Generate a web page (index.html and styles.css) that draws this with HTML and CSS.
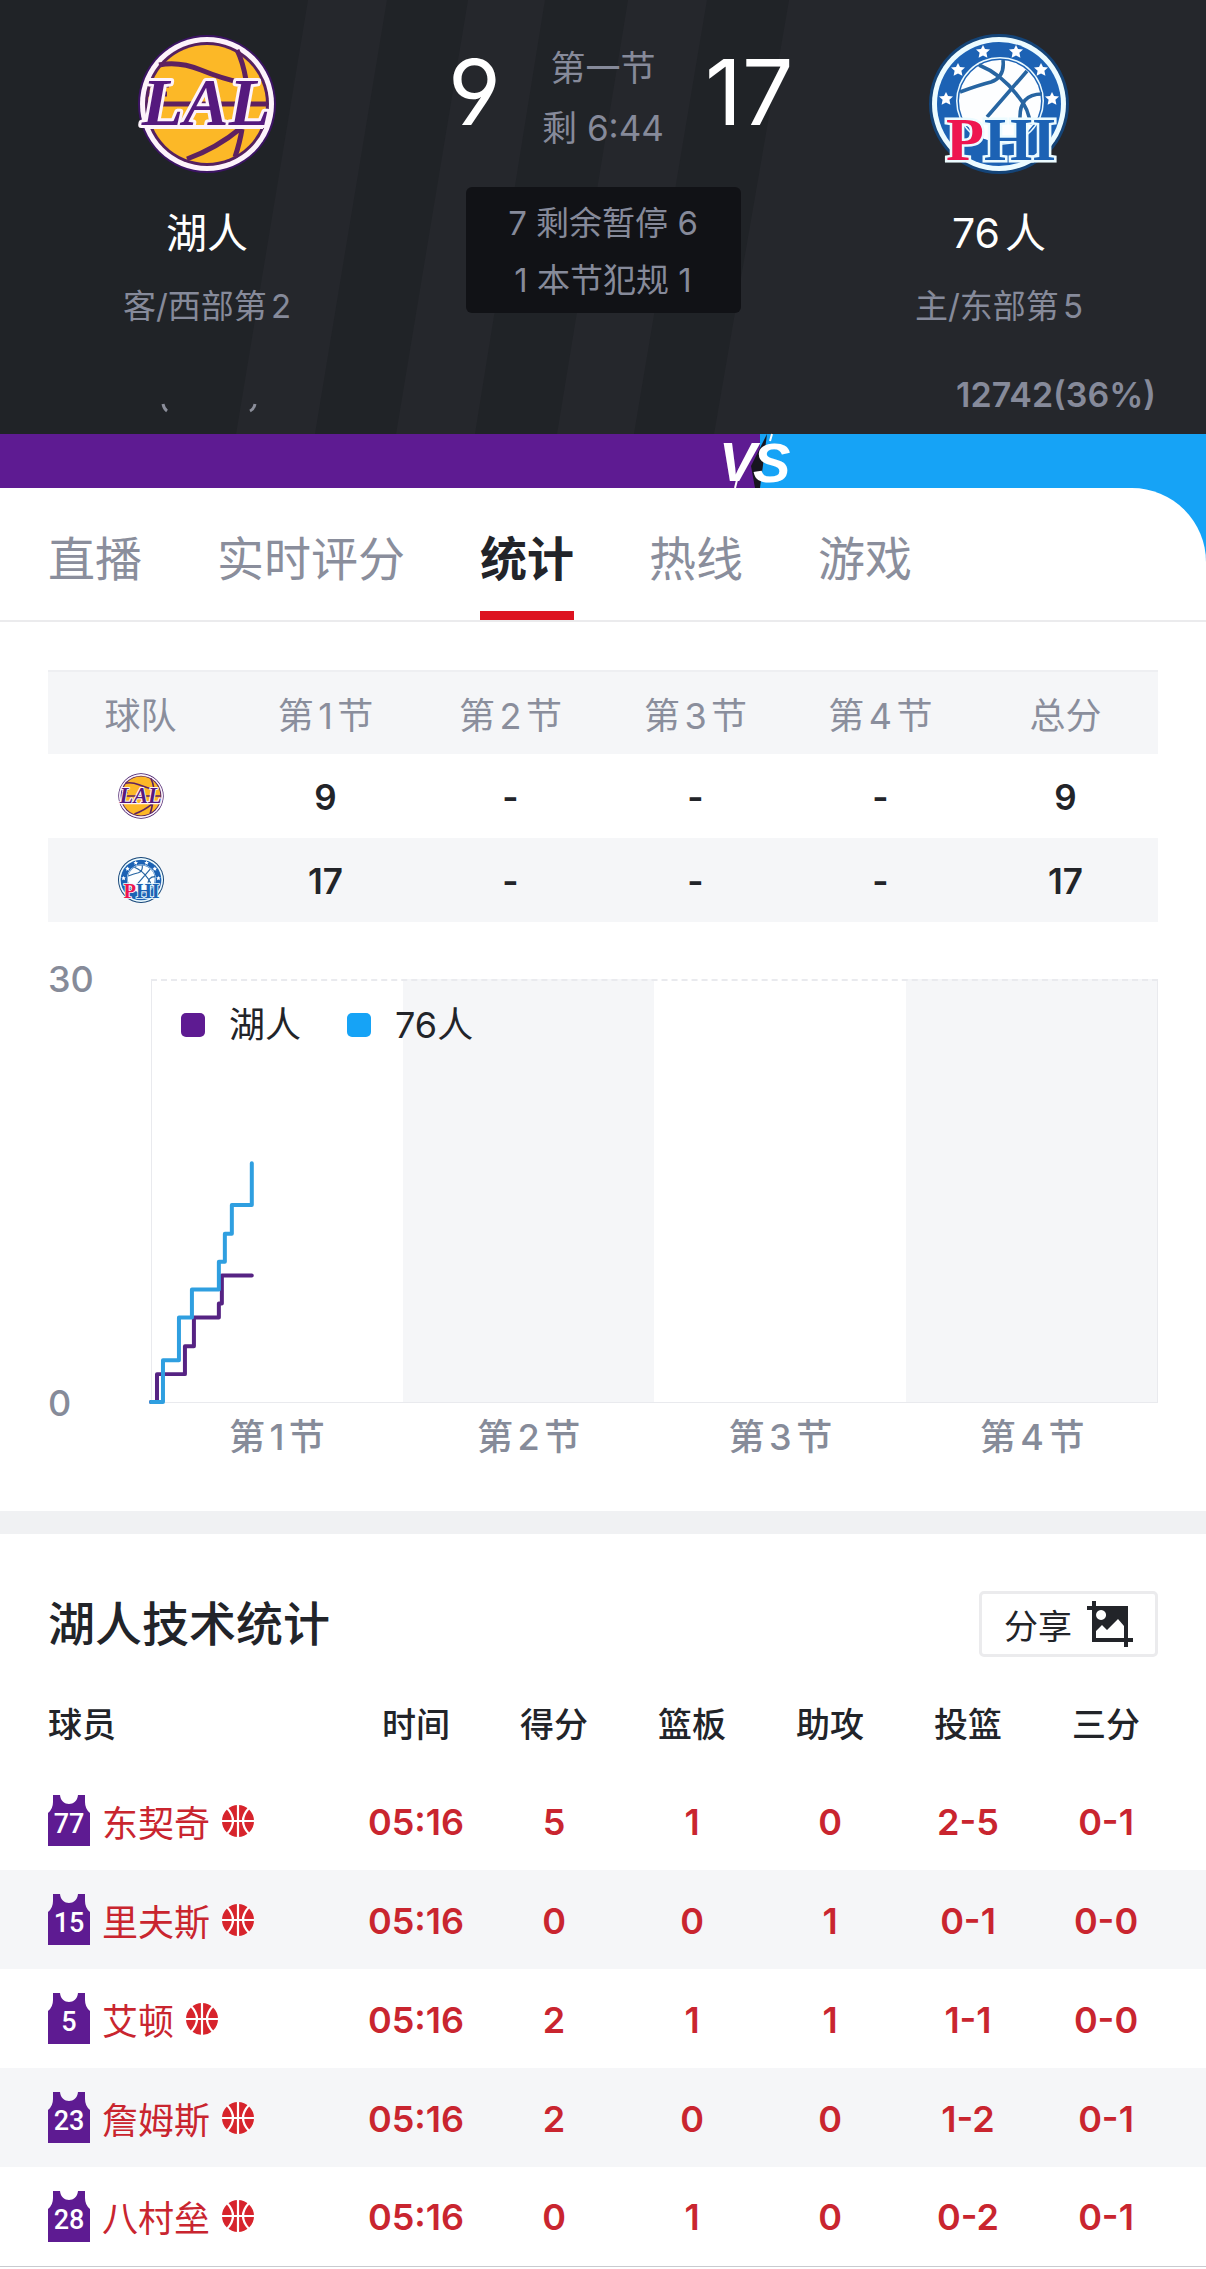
FILE: index.html
```html
<!DOCTYPE html>
<html lang="zh-CN">
<head>
<meta charset="utf-8">
<meta name="viewport" content="width=device-width, initial-scale=1">
<title>湖人 - 76人 统计</title>
<link rel="stylesheet" href="styles.css">
</head>
<body>
<svg class="defs" aria-hidden="true">
  <defs>
    <symbol id="lal" viewBox="0 0 140 140">
      <circle cx="70" cy="70" r="69" fill="#3c1464"/>
      <circle cx="70" cy="70" r="67" fill="#fdf3fb"/>
      <circle cx="70" cy="70" r="62" fill="#552060"/>
      <circle cx="70" cy="70" r="59" fill="#fcb827"/>
      <g fill="none" stroke="#5e2160" stroke-width="5">
        <path d="M22 31Q42 27 64 36T106 49M100 16Q106 28 109 46M12 51H32M10 60H30M10 70H130M50 125Q80 114 104 94M98 123Q103 108 105 95"/>
      </g>
      <path d="M8 93H126" stroke="#fdf3fb" stroke-width="4"/>
      <text x="69" y="91" text-anchor="middle" class="lal-text">LAL</text>
    </symbol>
    <symbol id="phi" viewBox="0 0 140 140">
      <circle cx="70" cy="70" r="70" fill="#144478"/>
      <circle cx="70" cy="70" r="67" fill="#ecfbff"/>
      <circle cx="70" cy="70" r="62" fill="#1c62b4"/>
      <circle cx="71" cy="67" r="44" fill="#ecfbff"/>
      <circle cx="71" cy="67" r="42.5" fill="#1c62b4"/>
      <circle cx="71" cy="67" r="41" fill="#fdfeff"/>
      <g fill="none" stroke="#2765a2" stroke-width="3.6">
        <path d="M50 31Q72 40 88 61Q101 76 101 91M31 58Q50 51 62 48Q76 43 74 26M98 37L58 83M91 85Q90 60 113 60"/>
      </g>
      <g fill="#fff">
        <path id="star" d="M54 11l2 4 5 .6-3.600 3.200 1 5-4.400-2.400-4.400 2.400 1-5-3.600-3.200 5-.6z"/>
        <use href="#star" x="33"/><use href="#star" x="-25" y="18"/><use href="#star" x="58" y="18"/>
        <use href="#star" x="-37" y="47"/><use href="#star" x="69" y="47"/>
      </g>
      <path d="M34 103Q50 100 70 112V130Q48 126 34 103Z" fill="#1c62b4"/>
      <text x="17" y="126" class="phi-text"><tspan fill="#ee1550">P</tspan><tspan fill="#1c62b4">HI</tspan></text>
    </symbol>
    <symbol id="jersey" viewBox="0 0 42 51">
      <path d="M5 0H12C13 12 29 12 30 0H37V7Q37 14 42 18V51H0V18Q5 14 5 7Z" fill="#5e1b92"/>
    </symbol>
    <symbol id="ball" viewBox="0 0 32 32">
      <circle cx="16" cy="16" r="16" fill="#d7242c"/>
      <path d="M0 16H32M16 0V32M5 3Q17 16 5 29M27 3Q15 16 27 29" fill="none" stroke="#fff" stroke-width="2.200"/>
    </symbol>
  </defs>
</svg>

<header class="hero">
  <svg class="hero-stripes" viewBox="0 0 1206 434" preserveAspectRatio="none" aria-hidden="true">
    <path d="M308 0H387L315 434H236ZM468 0H545L475 434H396ZM628 0H707L634 434H557ZM789 0H1206V434H714Z" fill="#25272c"/>
  </svg>
  <div class="match">
    <section class="team">
      <svg class="team-logo" role="img" aria-label="LAL"><use href="#lal"/></svg>
      <h1 class="team-name">湖人</h1>
      <p class="team-rank">客/西部第2</p>
    </section>
    <section class="center">
      <div class="scores">
        <strong class="score score-away">9</strong>
        <div class="period"><p>第一节</p><p>剩 6:44</p></div>
        <strong class="score score-home">17</strong>
      </div>
      <div class="fouls"><p>7 剩余暂停 6</p><p>1 本节犯规 1</p></div>
    </section>
    <section class="team">
      <svg class="team-logo" role="img" aria-label="PHI"><use href="#phi"/></svg>
      <h1 class="team-name">76人</h1>
      <p class="team-rank">主/东部第5</p>
    </section>
  </div>
  <div class="support">
    <svg class="support-mark" width="140" height="40" viewBox="0 0 140 40" aria-hidden="true">
      <path d="M45 29q1 5 4 7M132 36q4-2 5-7" fill="none" stroke="#8b8e9a" stroke-width="3"/>
    </svg>
    <span>12742(36%)</span>
  </div>
</header>

<div class="versus">
  <div class="versus-away"></div>
  <svg class="versus-logo" width="72" height="54" viewBox="0 0 72 54" role="img" aria-label="VS">
    <path d="M46 0L39 54H34L30 32Z" fill="#17151f"/>
    <path d="M51 0L49 7M14 54L16 46" stroke="#fff" stroke-width="2"/>
    <text x="-2" y="47" class="vs-text">V</text><text x="32" y="48" class="vs-text">S</text>
  </svg>
</div>
<div class="tabs-wrap">
  <nav class="tabs">
    <a href="#live">直播</a>
    <a href="#rating">实时评分</a>
    <a href="#stats" class="active" aria-current="page">统计</a>
    <a href="#hotline">热线</a>
    <a href="#games">游戏</a>
  </nav>
</div>

<main>
  <section class="summary">
    <table class="quarters">
      <thead><tr><th>球队</th><th>第1节</th><th>第2节</th><th>第3节</th><th>第4节</th><th>总分</th></tr></thead>
      <tbody>
        <tr><td><svg class="mini-logo" role="img" aria-label="湖人"><use href="#lal"/></svg></td><td>9</td><td>-</td><td>-</td><td>-</td><td>9</td></tr>
        <tr><td><svg class="mini-logo" role="img" aria-label="76人"><use href="#phi"/></svg></td><td>17</td><td>-</td><td>-</td><td>-</td><td>17</td></tr>
      </tbody>
    </table>
    <div class="chart">
      <div class="y-axis"><span>30</span><span>0</span></div>
      <div class="plot">
        <div class="legend">
          <span class="key key-away">湖人</span>
          <span class="key key-home">76人</span>
        </div>
        <svg class="lines" viewBox="0 0 1007 423" preserveAspectRatio="none" aria-hidden="true">
          <path class="line-away" d="M-1 423H5V395H33V367H42V338H67V324H70V296H100"/>
          <path class="line-home" d="M-1 423H11V381H27V338H40V310H67V282H73V254H80V225H100V183"/>
        </svg>
      </div>
      <div class="x-axis"><span>第1节</span><span>第2节</span><span>第3节</span><span>第4节</span></div>
    </div>
  </section>

  <section class="players">
    <div class="players-head">
      <h2>湖人技术统计</h2>
      <button type="button" class="share">分享
        <svg width="46" height="46" viewBox="0 0 46 46" aria-hidden="true">
          <path fill="#222429" fill-rule="evenodd" d="M5 0H9V5H41V37H46V41H41V46H37V41H5V9H0V5H5ZM14 9a5 5 0 1 0 .1 0ZM9 30V37H37V25L31 18L20 29L15 24Z"/>
        </svg>
      </button>
    </div>
    <table class="stats">
      <colgroup><col class="col-player"><col class="col-stat" span="5"><col></colgroup>
      <thead><tr><th>球员</th><th>时间</th><th>得分</th><th>篮板</th><th>助攻</th><th>投篮</th><th>三分</th></tr></thead>
      <tbody>
        <tr><th><div class="player"><svg class="jersey" viewBox="0 0 42 51"><use href="#jersey"/><text x="21" y="38">77</text></svg><a href="#p77">东契奇</a><svg class="ball" aria-hidden="true"><use href="#ball"/></svg></div></th><td>05:16</td><td>5</td><td>1</td><td>0</td><td>2-5</td><td>0-1</td></tr>
        <tr><th><div class="player"><svg class="jersey" viewBox="0 0 42 51"><use href="#jersey"/><text x="21" y="38">15</text></svg><a href="#p15">里夫斯</a><svg class="ball" aria-hidden="true"><use href="#ball"/></svg></div></th><td>05:16</td><td>0</td><td>0</td><td>1</td><td>0-1</td><td>0-0</td></tr>
        <tr><th><div class="player"><svg class="jersey" viewBox="0 0 42 51"><use href="#jersey"/><text x="21" y="38">5</text></svg><a href="#p5">艾顿</a><svg class="ball" aria-hidden="true"><use href="#ball"/></svg></div></th><td>05:16</td><td>2</td><td>1</td><td>1</td><td>1-1</td><td>0-0</td></tr>
        <tr><th><div class="player"><svg class="jersey" viewBox="0 0 42 51"><use href="#jersey"/><text x="21" y="38">23</text></svg><a href="#p23">詹姆斯</a><svg class="ball" aria-hidden="true"><use href="#ball"/></svg></div></th><td>05:16</td><td>2</td><td>0</td><td>0</td><td>1-2</td><td>0-1</td></tr>
        <tr><th><div class="player"><svg class="jersey" viewBox="0 0 42 51"><use href="#jersey"/><text x="21" y="38">28</text></svg><a href="#p28">八村垒</a><svg class="ball" aria-hidden="true"><use href="#ball"/></svg></div></th><td>05:16</td><td>0</td><td>1</td><td>0</td><td>0-2</td><td>0-1</td></tr>
      </tbody>
    </table>
  </section>
</main>
</body>
</html>
```
FILE: styles.css
```css
* { box-sizing: border-box; }

body {
  margin: 0;
  background: #fff;
  color: #222429;
  font-family: Inter, "Noto Sans CJK SC", sans-serif;
  text-autospace: normal;
}

h1, h2, p { margin: 0; font-weight: 400; }
a { color: inherit; text-decoration: none; }
table { width: 100%; border-collapse: collapse; table-layout: fixed; }
th, td { padding: 0; text-align: center; }

.defs { position: absolute; width: 0; height: 0; }

/* Scoreboard */
.hero {
  position: relative;
  padding: 34px 0 19px;
  background: #202327;
  color: #868a9a;
}
.hero-stripes { position: absolute; inset: 0; width: 100%; height: 100%; }
.match {
  position: relative;
  display: grid;
  grid-template-columns: 414fr 378fr 414fr;
}
.team { text-align: center; }
.team-logo { display: block; width: 140px; height: 140px; margin: 0 auto; }
.team-name { margin-top: 31px; color: #fff; font-size: 41px; line-height: 56px; }
.team-rank { margin-top: 23px; font-size: 33px; line-height: 44px; }

.lal-text {
  font: italic bold 68px "Liberation Serif", serif;
  fill: #55197e;
  stroke: #fdf3fb;
  stroke-width: 6px;
  stroke-linejoin: round;
  paint-order: stroke;
}
.phi-text {
  font: bold 62px "Liberation Serif", serif;
  stroke: #ecfbff;
  stroke-width: 5px;
  paint-order: stroke;
}

.scores { display: grid; grid-template-columns: 1fr 126px 1fr; gap: 39px; margin: 0 -46px; }
.score {
  color: #fff;
  font: 400 91px/116px Inter, sans-serif;
  font-feature-settings: "ss01";
}
.score-away { text-align: right; }
.period { padding-top: 4px; font-size: 35px; line-height: 60px; text-align: center; white-space: nowrap; }
.fouls {
  width: 275px;
  margin: 29px auto 0;
  padding: 8px 0 4px;
  border-radius: 6px;
  background: #111216;
  font-size: 33px;
  line-height: 57px;
  text-align: center;
}
.support {
  position: relative;
  display: flex;
  justify-content: space-between;
  margin-top: 47px;
  padding: 0 50px 0 118px;
  font-size: 34px;
  font-weight: 600;
  line-height: 40px;
}

/* Support bar */
.versus { position: relative; display: flex; height: 54px; background: #16a3f6; }
.versus-away { width: 62.5%; background: #5e1b92; }
.versus-logo {
  margin-left: -33px;
  overflow: visible;
  background: linear-gradient(90deg, #5e1b92 54%, #16a3f6 54%);
}
.vs-text {
  font: italic bold 56px "Liberation Sans", sans-serif;
  fill: #fff;
}

/* Tabs */
.tabs-wrap { background: #16a3f6; }
.tabs {
  display: flex;
  gap: 75px;
  padding: 35px 48px 0;
  border-bottom: 2px solid #ebebed;
  border-top-right-radius: 74px;
  background: #fff;
  color: #8a8e9c;
  font-size: 47px;
  line-height: 72px;
}
.tabs a { padding-bottom: 25px; }
.tabs .active {
  padding-bottom: 16px;
  border-bottom: 9px solid #dd1320;
  color: #222429;
  font-weight: 700;
}

/* Quarter scores */
.summary { padding: 48px 48px 50px; }
.quarters { border-top: 2px solid #eeeff2; }
.quarters thead tr { height: 83px; }
.quarters tbody tr { height: 84px; }
.quarters th { color: #8a8e9c; font-size: 36px; font-weight: 400; }
.quarters td { padding-top: 2px; font-size: 35px; font-weight: 600; }
.quarters td:first-child { padding-top: 0; }
.quarters thead, .quarters tbody tr:nth-child(even) { background: #f5f6f8; }
.mini-logo { display: block; width: 46px; height: 46px; margin: 0 auto; }

/* Score chart */
.chart {
  display: grid;
  grid-template-columns: 103px 1fr;
  margin-top: 57px;
  color: #868b99;
  font-size: 36px;
  font-weight: 500;
}
.y-axis {
  display: flex;
  flex-direction: column;
  justify-content: space-between;
  margin: -20px 0;
  line-height: 40px;
}
.plot {
  position: relative;
  height: 424px;
  padding: 22px 29px;
  border: 1px solid #e9eaee;
  border-top: 2px dashed #e9eaee;
  background: linear-gradient(90deg, #fff 25%, #f5f6f8 25% 50%, #fff 50% 75%, #f5f6f8 75%);
}
.legend {
  display: flex;
  gap: 46px;
  color: #222429;
  font-weight: 400;
  line-height: 44px;
  text-autospace: no-autospace;
}
.key { display: flex; align-items: center; gap: 24px; }
.key::before { content: ""; width: 24px; height: 24px; border-radius: 5px; }
.key-away::before { background: #5e1b92; }
.key-home::before { background: #16a3f6; }
.lines {
  position: absolute;
  inset: 0;
  width: 100%;
  height: 100%;
  overflow: visible;
  fill: none;
  stroke-width: 4px;
  stroke-linejoin: round;
  stroke-linecap: round;
}
.line-away { stroke: #562383; }
.line-home { stroke: #2f9fe0; }
.x-axis {
  display: grid;
  grid-column: 2;
  grid-template-columns: repeat(4, 1fr);
  margin-top: 10px;
  line-height: 48px;
  text-align: center;
}

/* Player statistics */
.players { border-top: 23px solid #f0f1f3; }
.players-head {
  display: flex;
  align-items: center;
  justify-content: space-between;
  padding: 57px 48px 0;
}
.players-head h2 { font-size: 47px; font-weight: 500; line-height: 66px; }
.share {
  display: flex;
  align-items: center;
  gap: 15px;
  height: 66px;
  padding: 0 22px;
  border: 3px solid #ebebed;
  border-radius: 5px;
  background: #fff;
  color: #222429;
  font: 400 34px Inter, "Noto Sans CJK SC", sans-serif;
}
.stats { border-bottom: 1px solid #c9cacf; }
.col-player { width: 347px; }
.col-stat { width: 138px; }
.stats th { font-size: 34px; font-weight: 500; }
.stats th:first-child { padding-left: 48px; text-align: left; }
.stats th:last-child, .stats td:last-child { padding-right: 31px; }
.stats thead tr { height: 114px; }
.stats thead th { padding-top: 16px; }
.stats tbody { color: #c9252f; }
.stats tbody tr { height: 99px; }
.stats tbody tr:nth-child(even) { background: #f5f6f8; }
.stats td { padding-top: 2px; font-size: 36px; font-weight: 600; }
.player { display: flex; align-items: center; gap: 12px; font-size: 36px; font-weight: 400; }
.jersey { width: 42px; height: 51px; }
.jersey text { fill: #fff; font: 500 27px Roboto, sans-serif; text-anchor: middle; }
.ball { width: 32px; height: 32px; }
```
